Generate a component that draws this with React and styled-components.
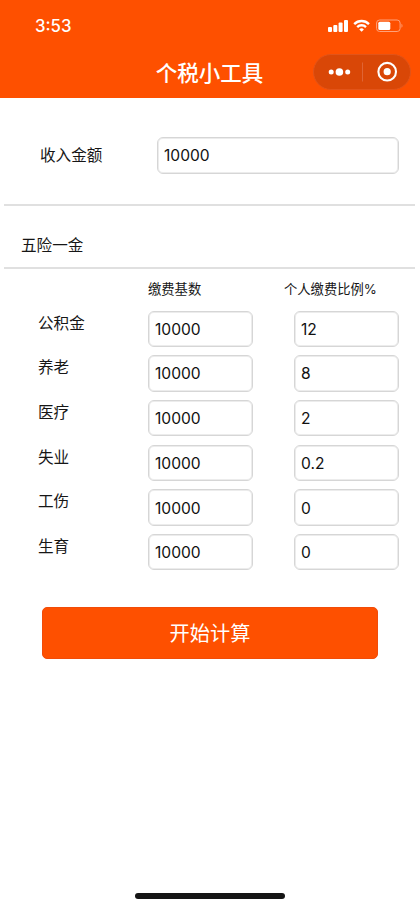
import React from "react";
import styled, { createGlobalStyle } from "styled-components";

const GlobalStyle = createGlobalStyle`
  * { box-sizing: border-box; }
  body {
    margin: 0;
    background: #fff;
    color: #161616;
    font-family: Inter, "Noto Sans CJK SC", sans-serif;
  }
`;

const Screen = styled.div`
  width: 420px;
  height: 908px;
  display: flex;
  flex-direction: column;
  background: #fff;
  overflow: hidden;
`;

const Header = styled.header`
  height: 98px;
  flex: none;
  background: #fe5000;
  color: #fff;
`;

const StatusBar = styled.div`
  height: 52px;
  display: flex;
  justify-content: space-between;
  padding: 16px 17px 0 35px;
`;

const Clock = styled.span`
  font-size: 16.8px;
  line-height: 20px;
  font-weight: 500;
`;

const StatusIcons = styled.svg`
  display: block;
  width: 76px;
  height: 18px;
`;

const NavBar = styled.div`
  height: 40px;
  display: grid;
  grid-template-columns: 97px 1fr 97px;
  align-items: center;
  padding: 0 9px;
`;

const Title = styled.h1`
  grid-column: 2;
  margin: 0 1px 1px 0;
  text-align: center;
  font-size: 21.5px;
  line-height: 32px;
  font-weight: 500;
  font-family: "Noto Sans CJK SC", sans-serif;
  white-space: nowrap;
`;

const Capsule = styled.div`
  width: 98px;
  height: 36px;
  margin-left: -1px;
  border-radius: 18px;
  background: #d94707;
  border: 1px solid #e25419;

  svg { display: block; }
`;

const IncomeSection = styled.section`
  height: 108px;
  flex: none;
  margin: 0 5px 0 4px;
  padding: 39px 16px 0 36px;
  display: flex;
  justify-content: space-between;
  border-bottom: 2px solid #e0e0e0;
`;

const Label = styled.label`
  font-size: 15.6px;
  line-height: 24px;
  padding-top: ${(p) => p.$top || 0}px;
  white-space: nowrap;
`;

const Field = styled.input`
  width: ${(p) => p.$width}px;
  height: 36.5px;
  padding: 1px 5px 0 6px;
  border: 1px solid #d6d6d6;
  box-shadow: inset 0 0 0 1px #ececec;
  border-radius: 6px;
  background: #fff;
  color: #111;
  font: 15.6px Inter, sans-serif;
  outline: none;
`;

const SectionTitle = styled.h2`
  height: 63px;
  flex: none;
  margin: 0 5px 0 4px;
  padding: 28px 17px 0;
  border-bottom: 2px solid #e0e0e0;
  font-size: 15.6px;
  line-height: 24px;
  font-weight: 400;
`;

const Columns = styled.div`
  height: 41.5px;
  flex: none;
  display: grid;
  grid-template-columns: 136px 1fr;
  padding: 10px 21px 0 148px;
  font-size: 13.3px;
  line-height: 20px;
`;

const Rows = styled.div`
  display: flex;
  flex-direction: column;
`;

const Row = styled.div`
  height: 44.7px;
  display: grid;
  grid-template-columns: 110px 105px 146px;
  justify-content: start;
  align-items: start;
  padding-left: 38px;

  & > :last-child { margin-left: 41px; }
`;

const Submit = styled.button`
  width: 336px;
  height: 52px;
  flex: none;
  margin: 28.5px 0 0 42px;
  padding: 0;
  border: 1px solid #f14c09;
  border-radius: 5px;
  background: #fe5000;
  color: #fff;
  font: 400 20.2px/50px "Noto Sans CJK SC", sans-serif;
`;

const HomeIndicator = styled.div`
  width: 150px;
  height: 6px;
  flex: none;
  margin: auto auto 9px 135px;
  border-radius: 3px;
  background: #151515;
`;

const insurances = [
  ["公积金", "12"],
  ["养老", "8"],
  ["医疗", "2"],
  ["失业", "0.2"],
  ["工伤", "0"],
  ["生育", "0"],
];

function DeviceStatus() {
  return (
    <StatusIcons viewBox="0 0 76 18" fill="#fff">
      <rect x="1" y="11" width="4" height="5" rx="1" />
      <rect x="6.3" y="9" width="4" height="7" rx="1" />
      <rect x="11.6" y="6.5" width="4" height="9.5" rx="1" />
      <rect x="17" y="4" width="4" height="12" rx="1" />
      <g fill="none" stroke="#fff" strokeWidth="2.3">
        <path d="M27.2 8.1a10.4 10.4 0 0 1 14.8 0" />
        <path d="M30.2 11.1a6.2 6.2 0 0 1 8.8 0" />
      </g>
      <path d="M34.6 15.7l-2.3-2.3a3.3 3.3 0 0 1 4.6 0z" />
      <rect x="49.6" y="4" width="23.5" height="11.5" rx="3" fill="none" stroke="#ffa17a" />
      <rect x="51.3" y="5.7" width="12" height="8.2" rx="1.5" />
      <path d="M74.5 7.7c1.3.5 1.3 3.5 0 4z" fill="#ffa17a" />
    </StatusIcons>
  );
}

function MiniProgramMenu() {
  return (
    <Capsule>
      <svg width="96" height="34" viewBox="0 0 96 34" fill="#fff">
        <circle cx="17.2" cy="17" r="2.5" />
        <circle cx="25.4" cy="17" r="3.8" />
        <circle cx="33.7" cy="17" r="2.5" />
        <path d="M48.5 7.5v19" stroke="#e06434" strokeWidth="1" />
        <circle cx="73.2" cy="16.7" r="8.8" fill="none" stroke="#fff" strokeWidth="2.1" />
        <circle cx="73.2" cy="16.7" r="3.6" />
      </svg>
    </Capsule>
  );
}

export default function App() {
  return (
    <Screen>
      <GlobalStyle />
      <Header>
        <StatusBar>
          <Clock>3:53</Clock>
          <DeviceStatus />
        </StatusBar>
        <NavBar>
          <Title>个税小工具</Title>
          <MiniProgramMenu />
        </NavBar>
      </Header>
      <IncomeSection>
        <Label $top={6.5}>收入金额</Label>
        <Field $width={242} defaultValue="10000" />
      </IncomeSection>
      <SectionTitle>五险一金</SectionTitle>
      <Columns>
        <span>缴费基数</span>
        <span>个人缴费比例%</span>
      </Columns>
      <Rows>
        {insurances.map(([name, rate]) => (
          <Row key={name}>
            <Label $top={1}>{name}</Label>
            <Field $width={105} defaultValue="10000" />
            <Field $width={105} defaultValue={rate} />
          </Row>
        ))}
      </Rows>
      <Submit>开始计算</Submit>
      <HomeIndicator />
    </Screen>
  );
}
